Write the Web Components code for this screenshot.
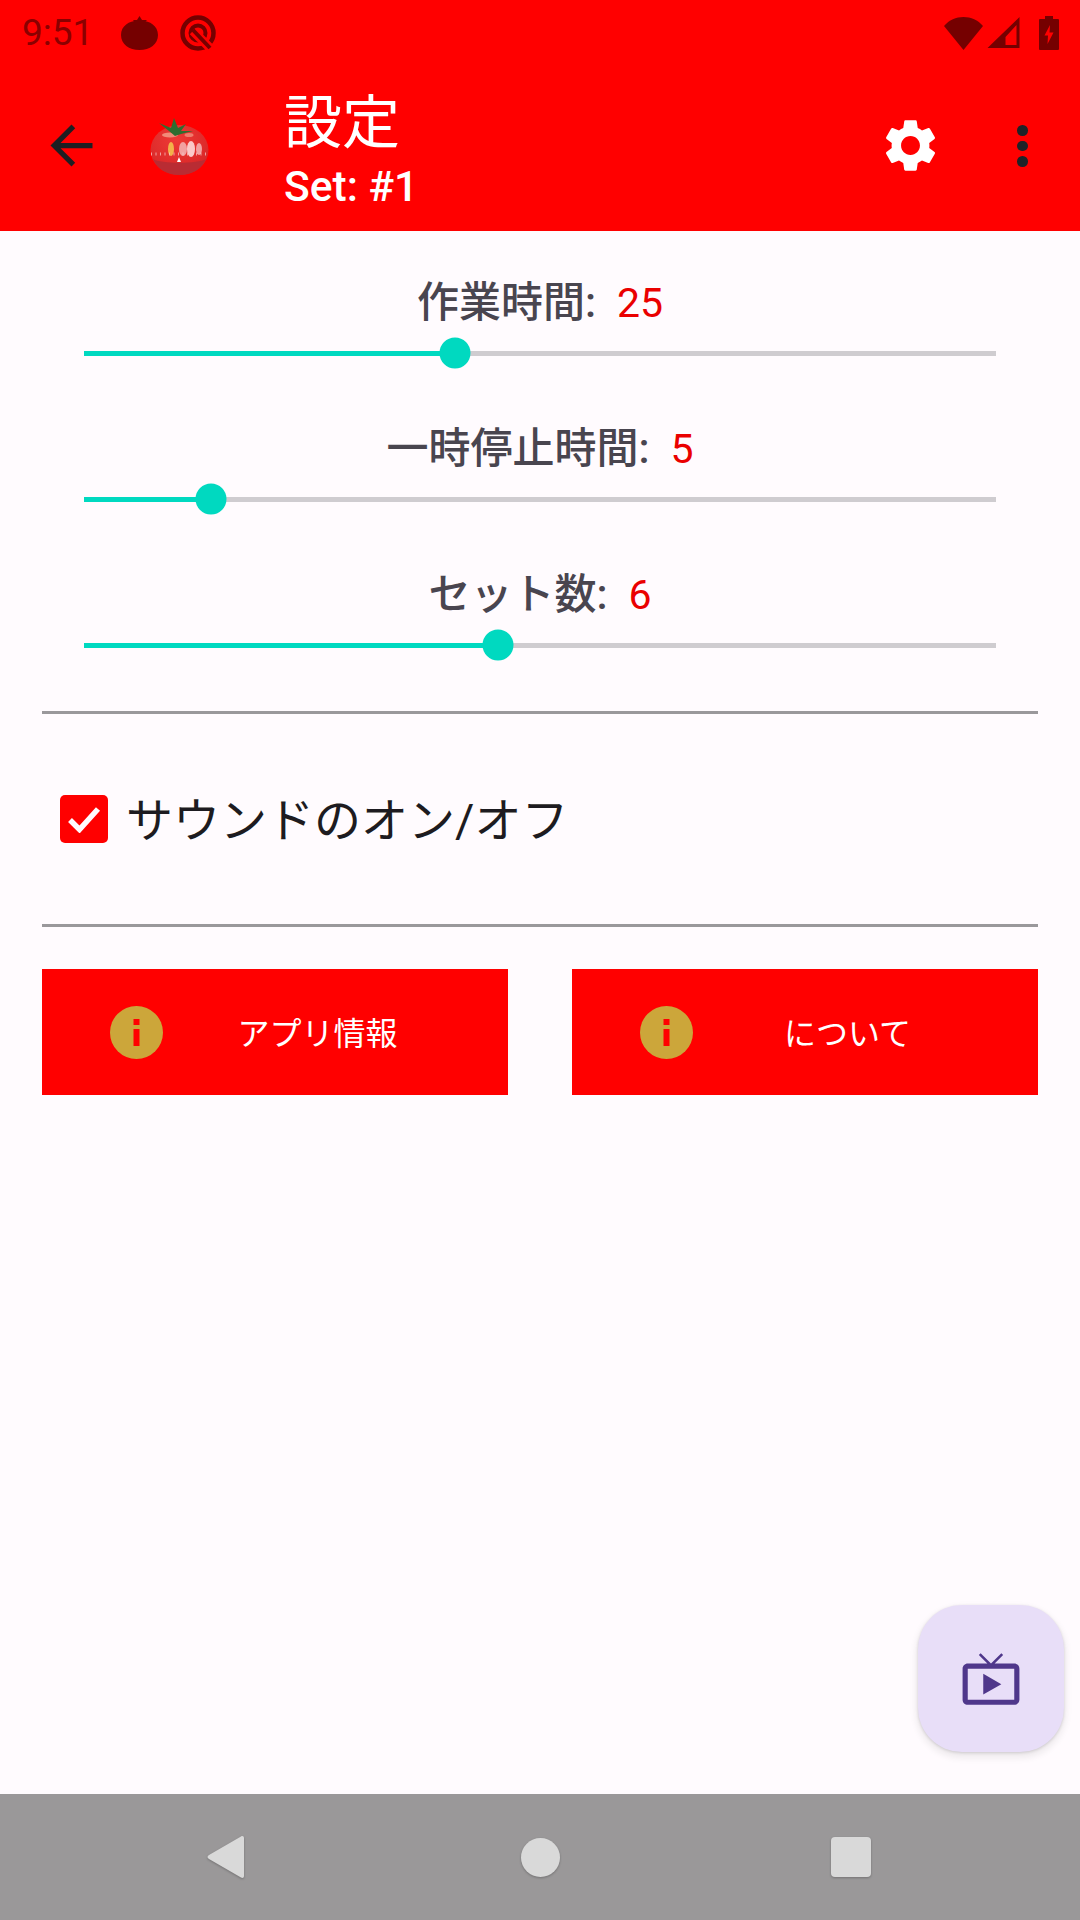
<!DOCTYPE html>
<html lang="ja"><head><meta charset="utf-8"><title>設定</title>
<style>
html,body{margin:0;padding:0;background:#fffbfe}
body{font-family:Roboto,"Noto Sans CJK JP",sans-serif}
app-screen{width:1080px;height:1920px}
</style></head><body>
<app-screen>
  <status-bar slot="top"></status-bar>
  <app-toolbar slot="top" title-text="設定" subtitle="Set: #1"></app-toolbar>
  <setting-slider label="作業時間:" value="25" pct="40.7"></setting-slider>
  <setting-slider label="一時停止時間:" value="5" pct="13.9"></setting-slider>
  <setting-slider label="セット数:" value="6" pct="45.4"></setting-slider>
  <app-divider style="margin-top:41px"></app-divider>
  <sound-check>サウンドのオン/オフ</sound-check>
  <app-divider></app-divider>
  <button-row>
    <info-button>アプリ情報</info-button>
    <info-button>について</info-button>
  </button-row>
  <tv-fab slot="overlay"></tv-fab>
  <nav-bar slot="bottom"></nav-bar>
</app-screen>
<script>
function def(name, html, init){
  customElements.define(name, class extends HTMLElement{
    constructor(){super();this.attachShadow({mode:'open'}).innerHTML=html;}
    connectedCallback(){ if(init) init(this, this.shadowRoot); }
  });
}
def('app-screen',`<style>
:host{display:flex;flex-direction:column;position:relative;background:#fffbfe;overflow:hidden}
main{flex:1;display:flex;flex-direction:column;padding:0 42px;min-height:0}
</style><slot name="top"></slot><main><slot></slot></main><slot name="overlay"></slot><slot name="bottom"></slot>`);

def('status-bar',`<style>
:host{display:flex;align-items:center;height:66px;background:#f00;color:#8a0000;padding:0 21px 0 22px;box-sizing:border-box;font:400 37px Roboto,sans-serif}
svg{display:block;fill:#750000}
.t{width:70px;line-height:66px;white-space:nowrap}
.sp{flex:1}
</style>
<span class="t">9:51</span>
<svg style="margin-left:29px;margin-top:-2px" width="37" height="35" viewBox="0 0 37 35"><path d="M18.500 6C27 5 37 10 37 20c0 9-8 15-18.500 15S0 29 0 20C0 10 10 5 18.500 6z"/><path d="M12 5l4 0 2.500-4 2.500 4 5 0-4 4H15z"/></svg>
<svg style="margin-left:22px" width="36" height="36" viewBox="0 0 36 36"><circle cx="18" cy="18" r="15.500" fill="none" stroke="#750000" stroke-width="4.500"/><circle cx="18" cy="18" r="7.500" fill="none" stroke="#750000" stroke-width="4"/><path d="M13 16l17 17" stroke="#f00" stroke-width="9"/><path d="M13 15l17 18" stroke="#750000" stroke-width="4"/></svg>
<span class="sp"></span>
<svg width="39" height="33" viewBox="0 0 39 33"><path d="M0 9C5 3 12 0 19.500 0S34 3 39 9L19.500 33z"/></svg>
<svg style="margin-left:4px" width="34" height="32" viewBox="0 0 33 32"><path fill-rule="evenodd" d="M32 0V31H0zM29 8L18 20V28H29z"/></svg>
<svg style="margin-left:18px" width="20" height="34" viewBox="0 0 20 34"><path d="M6 0h8v3h5a1 1 0 0 1 1 1V33a1 1 0 0 1-1 1H1a1 1 0 0 1-1-1V4a1 1 0 0 1 1-1H6z"/><path d="M11 9L5.500 19.500H9L8.500 28 14.500 16.500H10.500z" fill="#f00"/></svg>`);

def('app-toolbar',`<style>
:host{display:flex;align-items:flex-start;height:165px;background:#f00;position:relative;box-sizing:border-box}
svg{display:block;flex:none}
.back{margin:48px 0 0 40px}
.logo{margin:52px 0 0 47px}
.txt{margin:19px 0 0 74px;color:#fff;display:flex;flex-direction:column}
.h{font:400 58px/66px "Noto Sans CJK JP",sans-serif}
.s{font:500 42.500px/50px Roboto,sans-serif;margin-top:11px}
.sp{flex:1}
.gear{margin:48px 0 0 0}
.dots{margin:49px 53px 0 75px;width:10px;display:flex;flex-direction:column;gap:5px;padding-top:10px}
.dots i{display:block;width:10.500px;height:10.500px;border-radius:50%;background:#1f2328}
</style>
<svg class="back" width="63" height="63" viewBox="0 0 24 24"><path fill="#1e1e22" d="M20 11H7.830l5.590-5.590L12 4l-8 8 8 8 1.410-1.410L7.830 13H20z"/></svg>
<svg class="logo" width="60" height="60" viewBox="0 0 60 60">
<defs><radialGradient id="g" cx=".45" cy=".3" r=".8"><stop offset="0" stop-color="#ee3a36"/><stop offset=".7" stop-color="#dc2a2a"/><stop offset="1" stop-color="#c9262a"/></radialGradient></defs>
<ellipse cx="29.500" cy="32" rx="29" ry="25" fill="url(#g)"/>
<path d="M3 41c8 5 45 5 53 0-4 10-14 16-26.500 16S7 51 3 41z" fill="#b92c33"/>
<ellipse cx="20" cy="17" rx="8" ry="2.500" fill="#f28a78"/><ellipse cx="39" cy="17" rx="4.500" ry="2" fill="#ef7a6c"/>
<path d="M19 13L9 5l12 5 3-10 4 10 8-4-5 7 12 0-12 3-6 2z" fill="#2f6d30"/>
<ellipse cx="21" cy="31" rx="3" ry="7" fill="#f3b24a"/><ellipse cx="33" cy="31" rx="4" ry="7" fill="#f2a1a1"/><ellipse cx="41" cy="31" rx="4" ry="8" fill="#fbc9c9"/><ellipse cx="49" cy="31" rx="3" ry="6" fill="#f2a1a1"/>
<path d="M1 36H59" stroke="#f6d0d0" stroke-width="3" stroke-opacity=".7" stroke-dasharray="1 3.500"/>
<path d="M27 44l2-5 2 5z" fill="#fff"/>
</svg>
<div class="txt"><span class="h" id="h"></span><span class="s" id="s"></span></div>
<span class="sp"></span>
<svg class="gear" width="63" height="63" viewBox="0 0 24 24"><path fill="#fff" d="M19.140 12.940c.04-.3.06-.61.06-.94 0-.32-.02-.64-.07-.94l2.030-1.580c.18-.14.23-.41.12-.61l-1.920-3.320c-.12-.22-.37-.29-.59-.22l-2.390.96c-.5-.38-1.030-.7-1.620-.94l-.36-2.540c-.04-.24-.24-.41-.48-.41h-3.840c-.24 0-.43.17-.47.41l-.36 2.540c-.59.24-1.130.57-1.620.94l-2.390-.96c-.22-.08-.47 0-.59.22L2.740 8.870c-.12.21-.08.47.12.61l2.030 1.580c-.05.3-.09.63-.09.94s.02.64.07.94l-2.030 1.580c-.18.14-.23.41-.12.61l1.920 3.320c.12.22.37.29.59.22l2.390-.96c.5.38 1.030.7 1.620.94l.36 2.540c.05.24.24.41.48.41h3.840c.24 0 .44-.17.47-.41l.36-2.540c.59-.24 1.130-.56 1.620-.94l2.390.96c.22.08.47 0 .59-.22l1.920-3.320c.12-.22.07-.47-.12-.61l-2.010-1.580zM12 15.600c-1.980 0-3.600-1.620-3.600-3.600s1.620-3.600 3.600-3.600 3.600 1.620 3.600 3.600-1.620 3.600-3.600 3.600z"/></svg>
<div class="dots"><i></i><i></i><i></i></div>`,
(el,r)=>{r.getElementById('h').textContent=el.getAttribute('title-text');r.getElementById('s').textContent=el.getAttribute('subtitle');});

def('setting-slider',`<style>
:host{display:block;padding:46px 42px 0}
:host(:first-of-type){padding-top:47px}
.lab{display:flex;justify-content:center;gap:21px;height:50px;align-items:center;white-space:nowrap}
.l{font:500 42px/50px Roboto,"Noto Sans CJK JP",sans-serif;color:#49454f}
.v{font:400 41px/50px Roboto,sans-serif;color:#ea0000}
.track{height:50px;display:flex;align-items:center}
.row{position:relative;flex:1;height:5px;background:#cfccd0}
.fill{height:100%;background:#00d9c0}
.thumb{position:absolute;top:50%;width:31px;height:31px;border-radius:50%;background:#00d9c0;transform:translate(-50%,-50%)}
</style>
<div class="lab"><span class="l" id="l"></span><span class="v" id="v"></span></div>
<div class="track"><div class="row"><div class="fill" id="f"></div><div class="thumb" id="t"></div></div></div>`,
(el,r)=>{r.getElementById('l').textContent=el.getAttribute('label');r.getElementById('v').textContent=el.getAttribute('value');
const p=el.getAttribute('pct')+'%';r.getElementById('f').style.width=p;r.getElementById('t').style.left=p;});

def('app-divider',`<style>:host{display:block;height:3px;background:#9a989b;flex:none}</style>`);

def('sound-check',`<style>
:host{display:flex;align-items:center;height:210px;padding-left:18px;font:400 47px/60px Roboto,"Noto Sans CJK JP",sans-serif;color:#1d1b20;white-space:nowrap}
.b{width:48px;height:48px;background:#f00;border-radius:5px;display:flex;align-items:center;justify-content:center;margin-right:18px;flex:none}
.x{position:relative;top:2px}
svg{display:block}
</style>
<span class="b"><svg width="34" height="28" viewBox="0 0 34 28"><path d="M3 15l9.500 9.500L31 4" fill="none" stroke="#fffbfe" stroke-width="5.500"/></svg></span><span class="x"><slot></slot></span>`);

def('button-row',`<style>:host{display:flex;justify-content:space-between;margin-top:42px}</style><slot></slot>`);

def('info-button',`<style>
:host{display:flex;align-items:center;width:466px;height:126px;background:#f00;color:#fff;font:400 32px/40px "Noto Sans CJK JP",sans-serif;padding:0 36px 0 68px;box-sizing:border-box}
svg{display:block;flex:none}
.t{flex:1;text-align:center;margin-top:-2px}
</style>
<svg width="53" height="53" viewBox="0 0 53 53"><circle cx="26.500" cy="26.500" r="26.500" fill="#cca63a"/><rect x="23.500" y="13" width="6" height="6" fill="#f00"/><rect x="23.500" y="23" width="6" height="17" fill="#f00"/></svg>
<span class="t"><slot></slot></span>`);

def('tv-fab',`<style>
:host{position:absolute;left:918px;top:1605px;width:146px;height:147px;border-radius:44px;background:#e8def8;display:flex;align-items:center;justify-content:center;box-shadow:0 4px 7px 2px rgba(0,0,0,.07),0 1px 3px rgba(0,0,0,.14)}
svg{display:block}
</style>
<svg width="62" height="62" viewBox="0 0 24 24"><path fill="#4f378b" d="M21 6h-7.590l3.290-3.290L16 2l-4 4-4-4-.71.71L10.590 6H3c-1.100 0-2 .89-2 2v12c0 1.100.9 2 2 2h18c1.100 0 2-.9 2-2V8c0-1.110-.9-2-2-2zm0 14H3V8h18v12zM9 10v8l7-4z"/></svg>`);

def('nav-bar',`<style>
:host{display:block;height:126px;background:#9a9899;position:relative}
.w{display:flex;height:100%;align-items:center;padding-left:207px}
svg{display:block;flex:none;filter:drop-shadow(0 1px 1px rgba(0,0,0,.25))}
</style><div class="w">
<svg width="38" height="44" viewBox="0 0 38 44"><path d="M34 1.500c1.500-1 3-.3 3 1.500V41c0 1.800-1.500 2.500-3 1.500L2 24c-2-1.200-2-2.800 0-4z" fill="#d9d9d9"/></svg>
<svg style="margin-left:276px" width="39" height="39" viewBox="0 0 39 39"><circle cx="19.500" cy="19.500" r="19.500" fill="#d9d9d9"/></svg>
<svg style="margin-left:271px" width="40" height="40" viewBox="0 0 40 40"><rect width="40" height="40" rx="4" fill="#d9d9d9"/></svg>
</div>`);
</script>
</body></html>
